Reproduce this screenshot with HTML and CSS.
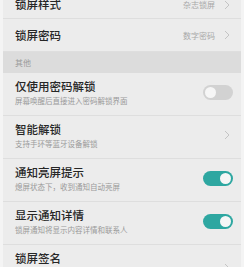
FILE: index.html
```html
<!DOCTYPE html>
<html lang="zh">
<head>
  <meta charset="UTF-8" />
  <title>锁屏设置</title>
  <link rel="stylesheet" href="styles.css">
</head>
<body>
  <div class="list">
    <div class="row short first">
      <div class="text"><div class="title">锁屏样式</div></div>
      <span class="value">杂志锁屏</span>
      <svg class="chev" viewBox="0 0 6 10"><path d="M1 1l4 4-4 4"/></svg>
    </div>
    <div class="row short">
      <div class="text"><div class="title">锁屏密码</div></div>
      <span class="value">数字密码</span>
      <svg class="chev" viewBox="0 0 6 10"><path d="M1 1l4 4-4 4"/></svg>
    </div>
    <div class="section">其他</div>
    <div class="row">
      <div class="text">
        <div class="title">仅使用密码解锁</div>
        <div class="sub">屏幕唤醒后直接进入密码解锁界面</div>
      </div>
      <span class="toggle"></span>
    </div>
    <div class="row">
      <div class="text">
        <div class="title">智能解锁</div>
        <div class="sub">支持手环等蓝牙设备解锁</div>
      </div>
      <svg class="chev" viewBox="0 0 6 10"><path d="M1 1l4 4-4 4"/></svg>
    </div>
    <div class="row">
      <div class="text">
        <div class="title">通知亮屏提示</div>
        <div class="sub">熄屏状态下，收到通知自动亮屏</div>
      </div>
      <span class="toggle on"></span>
    </div>
    <div class="row">
      <div class="text">
        <div class="title">显示通知详情</div>
        <div class="sub">锁屏通知将显示内容详情和联系人</div>
      </div>
      <span class="toggle on"></span>
    </div>
    <div class="row last">
      <div class="text"><div class="title">锁屏签名</div></div>
      <svg class="chev" viewBox="0 0 6 10"><path d="M1 1l4 4-4 4"/></svg>
    </div>
  </div>
</body>
</html>
```

FILE: styles.css
```css
* {
  margin: 0;
  padding: 0;
  box-sizing: border-box;
}

body {
  width: 244px;
  height: 267px;
  overflow: hidden;
  background: #f4f4f4;
  font-family: "Noto Sans CJK SC", "Noto Sans", sans-serif;
  color: #262626;
}

.list {
  margin: -9px 3px 0 3px;
  background: #ececec;
}

.row {
  display: flex;
  align-items: center;
  height: 43px;
  padding: 0 10px 4px 12px;
  border-bottom: 1px solid #dedede;
}

.row.short {
  height: 33px;
  padding-bottom: 0;
}

.row.first {
  height: 28px;
}

.row.last {
  height: 30px;
  align-items: flex-start;
  padding: 6px 10px 0 12px;
  border-bottom: none;
}

.row.last .chev {
  margin-top: 12px;
}

.text {
  flex: 1;
}

.title {
  font-size: 11.5px;
  font-weight: 500;
  line-height: 15px;
}

.sub {
  font-size: 7.5px;
  color: #9a9a9a;
  line-height: 11px;
  margin-top: 1px;
}

.value {
  font-size: 8px;
  color: #a8a8a8;
  margin-right: 9px;
}

.chev {
  width: 6px;
  height: 10px;
  margin-right: 1px;
  fill: none;
  stroke: #c4c4c4;
  stroke-width: 1;
}

.section {
  height: 21px;
  line-height: 21px;
  padding-left: 12px;
  font-size: 8px;
  color: #9a9a9a;
  background: #dcdcdc;
}

.toggle {
  position: relative;
  width: 30px;
  height: 15px;
  margin-right: -2px;
  border-radius: 8px;
  background: #d2d2d2;
}

.toggle::after {
  content: "";
  position: absolute;
  top: 2px;
  left: 2px;
  width: 11px;
  height: 11px;
  border-radius: 50%;
  background: #f6f6f6;
}

.toggle.on {
  background: #2ea7a1;
}

.toggle.on::after {
  left: 17px;
}
```
